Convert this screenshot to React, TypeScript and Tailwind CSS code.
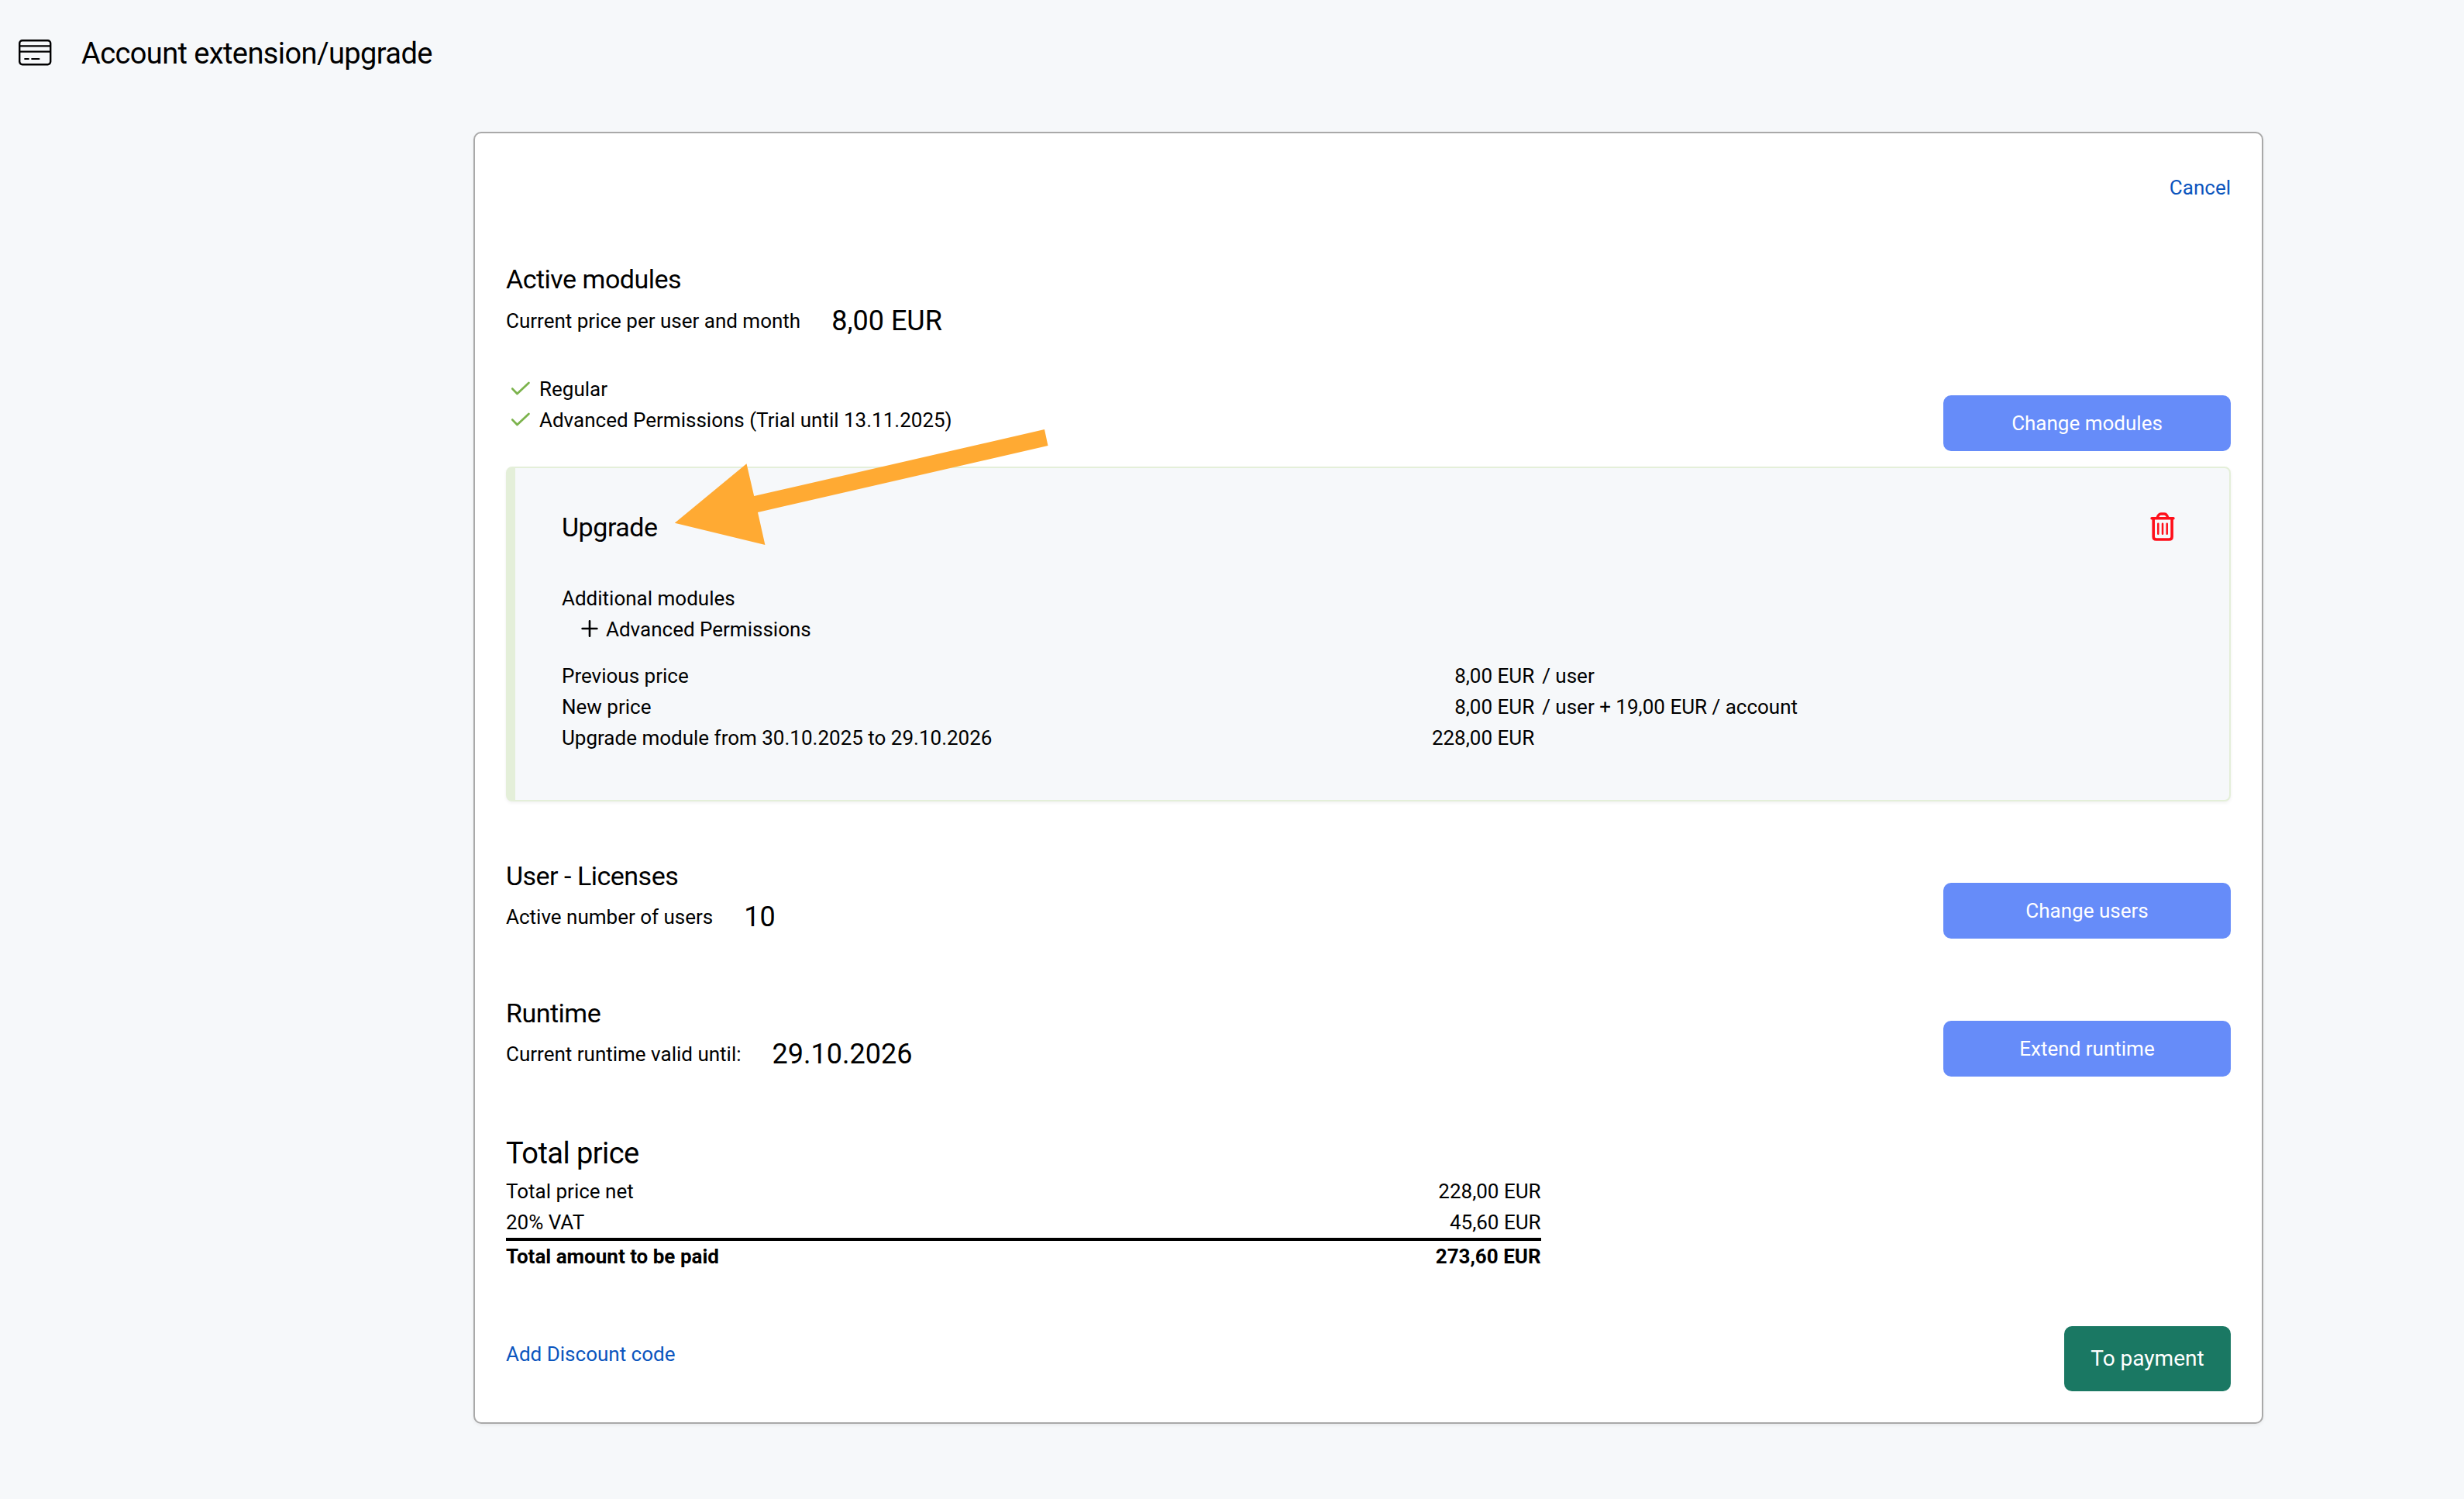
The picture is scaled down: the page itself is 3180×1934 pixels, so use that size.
// src/pages/account/AccountUpgrade.tsx
import type { ReactNode } from 'react';

const activeModules = ['Regular', 'Advanced Permissions (Trial until 13.11.2025)'];

const upgradeRows = [
  { label: 'Previous price', price: '8,00 EUR', unit: '/ user' },
  { label: 'New price', price: '8,00 EUR', unit: '/ user + 19,00 EUR / account' },
  { label: 'Upgrade module from 30.10.2025 to 29.10.2026', price: '228,00 EUR', unit: '' },
];

const totals = [
  { label: 'Total price net', value: '228,00 EUR' },
  { label: '20% VAT', value: '45,60 EUR' },
];

function CardIcon() {
  return (
    <svg className="w-11 h-9 mb-0.5" viewBox="0 0 44 36" fill="none" stroke="#000" strokeWidth="2.4">
      <rect x="2.2" y="2.2" width="40" height="31" rx="3.6" />
      <path d="M2 9.4h40M2 16.6h40" />
      <path d="M9.2 26h4.6M18.2 26h9.2" strokeLinecap="round" strokeWidth="2.2" />
    </svg>
  );
}

function CheckIcon() {
  return (
    <svg className="w-9 h-6" viewBox="0 0 36 24" fill="none" stroke="#7cb34d" strokeWidth="2.8">
      <path d="M8.3 11.6l6.2 6.4L29.4 4" strokeLinecap="round" strokeLinejoin="round" />
    </svg>
  );
}

function PlusIcon() {
  return (
    <svg className="w-6 h-6 -mt-0.5" viewBox="0 0 24 24" fill="none" stroke="#000" strokeWidth="2.6">
      <path d="M12 2.2v19.6M2.6 12h18.8" strokeLinecap="round" />
    </svg>
  );
}

function TrashIcon() {
  return (
    <svg className="w-[52px] h-12" viewBox="0 0 52 48" fill="none" stroke="#ff0f1a">
      <path
        d="M12 12.7h28M19 12.4c1.2-3.9 2.7-5.4 4.8-5.4h4.4c2.1 0 3.6 1.5 4.8 5.4"
        strokeWidth="3.4"
        strokeLinecap="round"
      />
      <path
        d="M14.2 12.7v23.7c0 2.2 1.4 3.6 3.6 3.6h16.7c2.2 0 3.6-1.4 3.6-3.6V12.7"
        strokeWidth="3.6"
      />
      <path d="M20.3 19.8v13M26 19.8v13M31.7 19.8v13" strokeWidth="2.5" strokeLinecap="round" />
    </svg>
  );
}

function ActionButton({ children }: { children: ReactNode }) {
  return (
    <button className="self-end w-[371px] h-[72px] rounded-[10px] bg-[#668cf9] text-white text-[26px] leading-10">
      {children}
    </button>
  );
}

function SectionInfo({
  title,
  label,
  value,
  rowClass = 'mt-[5px]',
}: {
  title: string;
  label: string;
  value: string;
  rowClass?: string;
}) {
  return (
    <div>
      <h2 className="text-[34px] leading-12 tracking-[-0.5px]">{title}</h2>
      <div className={`flex items-center gap-10 h-12 ${rowClass}`}>
        <span>{label}</span>
        <span className="text-[36px] leading-12">{value}</span>
      </div>
    </div>
  );
}

export default function AccountUpgrade() {
  return (
    <div className="relative w-[3180px] h-[1934px] overflow-hidden bg-[#f6f8fa] font-['Roboto',sans-serif] text-[26px] leading-10 text-black">
      <header className="flex items-center gap-[38px] h-[138px] pl-[23px]">
        <CardIcon />
        <h1 className="text-[38px] leading-12 tracking-[-0.6px]">Account extension/upgrade</h1>
      </header>

      <main className="w-[2310px] h-[1667px] ml-[611px] mt-8 px-10 pt-[50px] bg-white border-2 border-[#a9a9a9] rounded-[10px] shadow-[0_2px_4px_rgba(0,0,0,0.06)]">
        <div className="flex justify-end">
          <a className="text-[#0b55be]">Cancel</a>
        </div>

        {/* Modules */}
        <section className="mt-[74px]">
          <SectionInfo
            title="Active modules"
            label="Current price per user and month"
            value="8,00 EUR"
            rowClass="mt-1.5"
          />
          <div className="flex justify-between h-[100px] mt-11">
            <ul>
              {activeModules.map((m) => (
                <li key={m} className="flex items-center gap-[7px]">
                  <CheckIcon />
                  {m}
                </li>
              ))}
            </ul>
            <ActionButton>Change modules</ActionButton>
          </div>

          <div className="h-[432px] mt-5 px-[60px] pt-[52px] bg-[#f6f8fa] border-2 border-l-12 border-[#e4efd9] rounded-[8px] shadow-[0_2px_4px_rgba(0,0,0,0.06)]">
            <div className="flex items-center justify-between h-12">
              <h2 className="text-[34px] leading-12 tracking-[-0.45px]">Upgrade</h2>
              <button>
                <TrashIcon />
              </button>
            </div>
            <p className="mt-12">Additional modules</p>
            <p className="flex items-center gap-[9px] pl-6">
              <PlusIcon />
              Advanced Permissions
            </p>
            <div className="mt-5">
              {upgradeRows.map((row) => (
                <div key={row.label} className="flex gap-2.5">
                  <div className="flex justify-between w-3/5">
                    <span>{row.label}</span>
                    <span>{row.price}</span>
                  </div>
                  <span>{row.unit}</span>
                </div>
              ))}
            </div>
          </div>
        </section>

        {/* Users */}
        <section className="flex justify-between h-[105px] mt-[72px]">
          <SectionInfo title="User - Licenses" label="Active number of users" value="10" />
          <ActionButton>Change users</ActionButton>
        </section>

        {/* Runtime */}
        <section className="flex justify-between h-[106px] mt-[72px]">
          <SectionInfo title="Runtime" label="Current runtime valid until:" value="29.10.2026" />
          <ActionButton>Extend runtime</ActionButton>
        </section>

        {/* Total */}
        <section className="w-3/5 mt-[75px]">
          <h1 className="text-[38px] leading-12 tracking-[-0.55px]">Total price</h1>
          <div className="mt-[5px]">
            {totals.map((t) => (
              <div key={t.label} className="flex justify-between">
                <span>{t.label}</span>
                <span>{t.value}</span>
              </div>
            ))}
            <div className="flex justify-between border-t-4 border-black font-bold">
              <span>Total amount to be paid</span>
              <span>273,60 EUR</span>
            </div>
          </div>
        </section>

        <footer className="flex items-start justify-between mt-[70px]">
          <a className="mt-4 text-[#0b55be]">Add Discount code</a>
          <button className="w-[215px] h-[84px] rounded-[10px] bg-[#1a7863] text-white text-[28px]">
            To payment
          </button>
        </footer>
      </main>

      {/* Arrow pointing at the upgrade box */}
      <svg className="absolute left-[860px] top-[540px] w-[500px] h-[170px]" viewBox="860 540 500 170">
        <path
          d="M870.8 674.7L963.5 598.3L973.2 640L1348 554L1352.5 575L978 661L987.4 703Z"
          fill="#ffaa33"
        />
      </svg>
    </div>
  );
}
